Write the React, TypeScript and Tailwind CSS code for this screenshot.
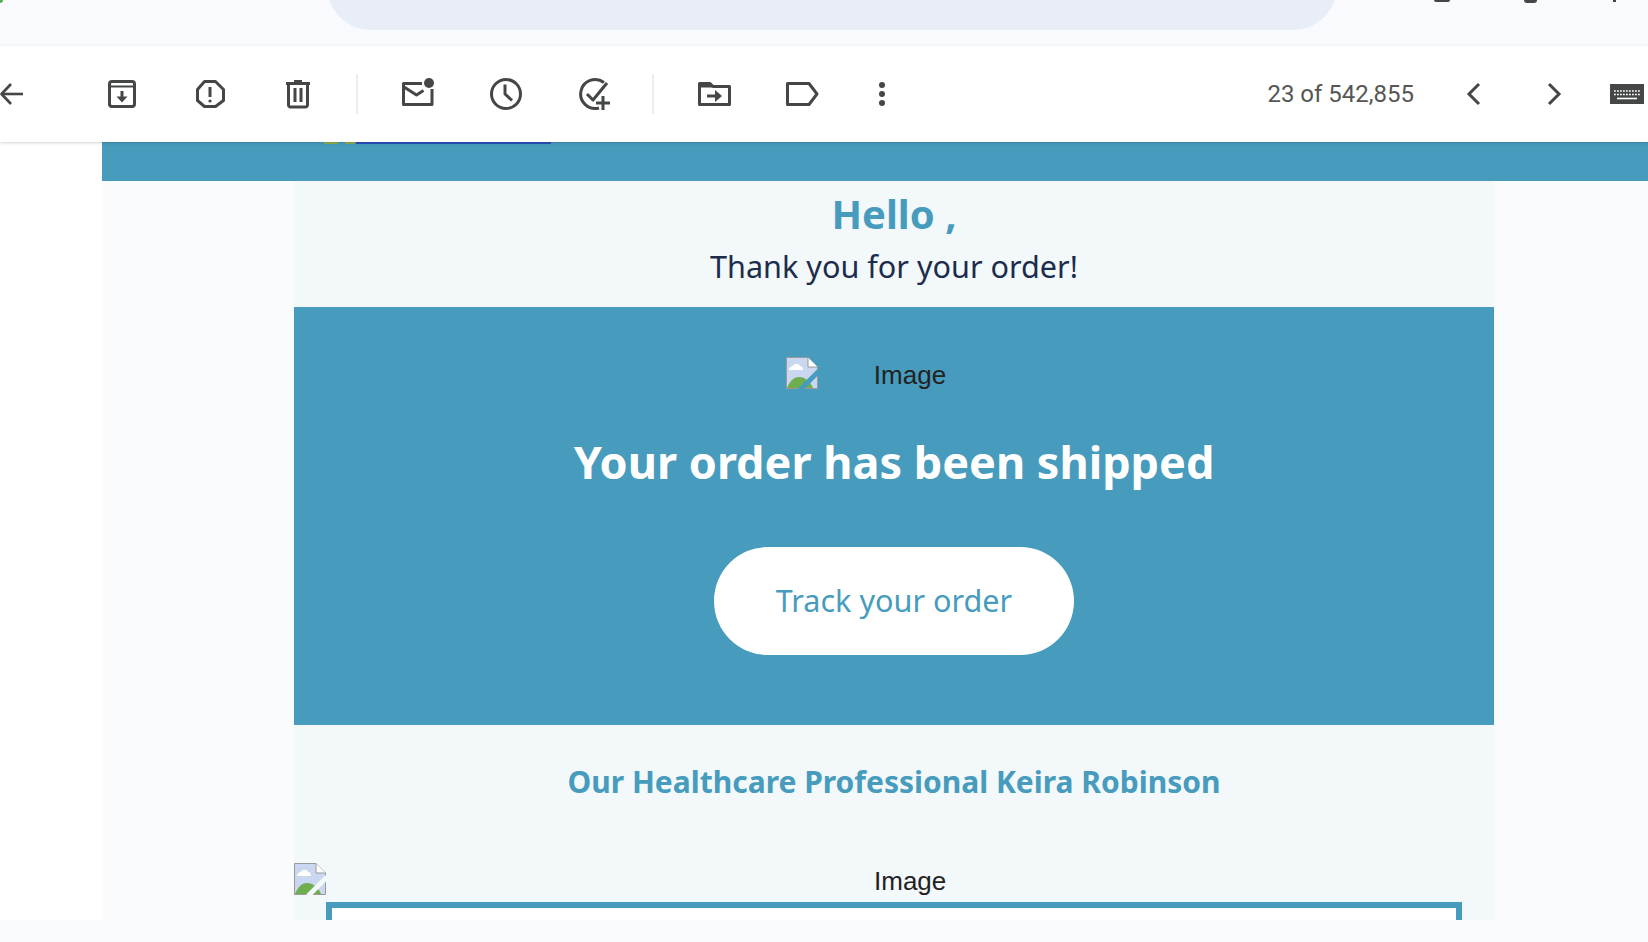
const body = { fontFamily: '"Noto Sans", "Open Sans", sans-serif' };
const arial = { fontFamily: '"Liberation Sans", sans-serif' };

function BrokenImage({ cut = "#479cbd" }: { cut?: string }) {
  return (
    <svg width="32" height="32" viewBox="0 0 32 32" className="shrink-0">
      <path d="M.5.5H22L31.5 10V31.5H.5Z" fill="#c9d7f1" stroke="#9a9a9a" />
      <path d="M22 .5V10H31.5" fill="#fff" stroke="#9a9a9a" />
      <path d="M3 13C3 10 6 9 7 9C8 6 13 6 14 9C16 9 17 11 17 13Z" fill="#fff" />
      <path d="M1 31C4 23 9 20 13 20C19 20 24 24 27 31Z" fill="#6fae4f" />
      <path d="M14 33L33 14" stroke={cut} strokeWidth="5" />
    </svg>
  );
}

function Icon({ children, w = 36 }: { children: React.ReactNode; w?: number }) {
  return (
    <svg width={w} height="36" viewBox={`0 0 ${w} 36`} fill="none" stroke="#444746" strokeWidth="3" strokeLinejoin="round">
      {children}
    </svg>
  );
}

function Slot({ children, className = "w-[88px]" }: { children: React.ReactNode; className?: string }) {
  return <div className={`flex justify-center items-center ${className}`}>{children}</div>;
}

function Divider({ className }: { className: string }) {
  return <div className={`w-[2px] h-[40px] bg-[#eeeeee] ${className}`} />;
}

export default function App() {
  return (
    <div className="flex flex-col h-[942px] w-[1648px] overflow-hidden bg-[#f8fafd]" style={body}>
      <div className="relative h-[46px] shrink-0 overflow-hidden pl-[327px]">
        <div className="w-[1010px] h-[88px] -mt-[58px] bg-[#e9eef6] rounded-[44px]" />
        <div className="absolute left-0 top-0 w-[3px] h-[3px] rounded-br-full bg-[#4caf50]" />
        <div className="absolute left-[1434px] top-0 w-[16px] h-[2px] rounded-b-full bg-[#444746]" />
        <div className="absolute left-[1524px] top-0 w-[13px] h-[3px] rounded-b-[3px] bg-[#444746]" />
        <div className="absolute left-[1613px] top-0 w-[3px] h-[2px] bg-[#444746]" />
      </div>

      <div className="relative z-10 h-[96px] shrink-0 bg-white flex items-center shadow-[0_1px_3px_rgba(0,0,0,0.18)]">
        <div className="w-[78px]">
          <Icon w={24}>
            <path d="M23 18H2" strokeWidth="2.6" />
            <path d="M11 8L1.5 18L11 28" strokeWidth="2.6" />
          </Icon>
        </div>
        <Slot>
          <Icon>
            <rect x="5.5" y="5.5" width="25" height="25" rx="2.5" />
            <path d="M6 10.5H30" strokeWidth="2" />
            <path d="M18 15V22" />
            <path d="M12.5 20.5H23.5L18 26.5Z" fill="#444746" stroke="none" />
          </Icon>
        </Slot>
        <Slot>
          <Icon>
            <path d="M12.5 5.5H23.5L31.5 13.5V24.5L23.5 30.5H12.5L5.5 24.5V13.5Z" />
            <path d="M18 11V21" />
            <circle cx="18" cy="25" r="1.6" fill="#444746" stroke="none" />
          </Icon>
        </Slot>
        <Slot>
          <Icon>
            <path d="M6 7.5H30" strokeWidth="3" />
            <path d="M14 5.5H22" strokeWidth="3" />
            <path d="M8.5 8V29C8.5 30 9.5 31 10.5 31H25.5C26.5 31 27.5 30 27.5 29V8" />
            <path d="M15 12V26M21 12V26" strokeWidth="3" />
          </Icon>
        </Slot>
        <Divider className="ml-[14px] mr-[16px]" />
        <Slot>
          <Icon>
            <path d="M22 7.5H3.5V28.5H32V13" />
            <path d="M4 11L16.5 19L23.5 14.5" />
            <circle cx="29" cy="7" r="5" fill="#444746" stroke="none" />
          </Icon>
        </Slot>
        <Slot>
          <Icon>
            <circle cx="18" cy="18" r="14.5" />
            <path d="M17 8.5V18L24 24.5" />
          </Icon>
        </Slot>
        <Slot>
          <Icon>
            <path d="M28 6.5A14.5 14.5 0 1 0 23 32" />
            <path d="M11 18L17 24L31 7" />
            <path d="M27 20V34M20 27H34" />
          </Icon>
        </Slot>
        <Divider className="ml-[14px] mr-[16px]" />
        <Slot>
          <Icon>
            <path d="M3.5 7.5H14L17 10.5H33.5V28.5H3.5Z" />
            <path d="M4 8H14L17 11.5H4Z" fill="#444746" stroke="none" />
            <path d="M11 20H20" strokeWidth="3" />
            <path d="M19 14L26 20L19 26Z" fill="#444746" stroke="none" />
          </Icon>
        </Slot>
        <Slot>
          <Icon>
            <path d="M3.5 7.5H25L33 18L25 28.5H3.5Z" />
          </Icon>
        </Slot>
        <Slot className="w-[72px]">
          <Icon>
            <circle cx="18" cy="9" r="3" fill="#444746" stroke="none" />
            <circle cx="18" cy="18" r="3" fill="#444746" stroke="none" />
            <circle cx="18" cy="27" r="3" fill="#444746" stroke="none" />
          </Icon>
        </Slot>
        <div className="ml-auto flex items-center pr-[4px]">
          <span className="text-[24px] text-[#555756]" style={{ fontFamily: "Roboto, sans-serif" }}>23 of 542,855</span>
          <Slot className="w-[80px] ml-[20px]">
            <Icon>
              <path d="M23 8L13 18L23 28" strokeLinejoin="miter" />
            </Icon>
          </Slot>
          <Slot className="w-[80px]">
            <Icon>
              <path d="M13 8L23 18L13 28" strokeLinejoin="miter" />
            </Icon>
          </Slot>
          <svg width="34" height="20" viewBox="0 0 34 20" className="ml-[16px]">
            <rect width="34" height="20" fill="#444746" />
            <path d="M4 7H30M4 10.5H30" stroke="#fff" strokeWidth="1.6" strokeDasharray="1.8 1.2" />
            <path d="M7 14.5H27" stroke="#fff" strokeWidth="1.6" />
          </svg>
        </div>
      </div>

      <div className="h-[778px] shrink-0 bg-white pl-[102px]">
        <div className="h-full bg-[#f9fbfd] flex flex-col">
          <div className="h-[39px] shrink-0 bg-[#479cbd] flex items-start pl-[222px]">
            <div className="w-[14px] h-[2px] bg-[#8fae4f]" />
            <div className="w-[10px] h-[2px] ml-[7px] bg-[#8fae4f]" />
            <div className="w-[195px] h-[2px] ml-[1px] bg-[#2a4fbf]" />
          </div>
          <div className="w-[1200px] ml-[192px] bg-[#f3f8fb] flex-1 flex flex-col items-center">
            <h1 className="text-[40px] leading-[46px] font-bold text-[#479cbd] mt-[10px]">Hello ,</h1>
            <p className="text-[30.6px] leading-[40px] text-[#1c2c4c] mt-[9px]">Thank you for your order!</p>
            <div className="w-full h-[418px] mt-[21px] bg-[#479cbd] flex flex-col items-center">
              <div className="flex items-start mt-[50px] h-[32px]">
                <BrokenImage />
                <span className="ml-[56px] mr-[56px] mt-[2px] text-[26px] leading-[32px] text-[#222222]" style={arial}>Image</span>
              </div>
              <h2 className="text-[45px] leading-[58px] font-bold text-white mt-[44px]">Your order has been shipped</h2>
              <div className="w-[360px] h-[108px] mt-[56px] bg-white rounded-full flex items-center justify-center text-[30.6px] text-[#479cbd]">
                Track your order
              </div>
            </div>
            <h3 className="text-[30px] leading-[40px] font-bold text-[#479cbd] mt-[37px]">Our Healthcare Professional Keira Robinson</h3>
            <div className="w-full flex items-start mt-[61px] h-[32px]">
              <BrokenImage cut="#f3f8fb" />
              <span className="ml-[548px] mt-[2px] text-[26px] leading-[32px] text-[#222222]" style={arial}>Image</span>
            </div>
            <div className="w-[1136px] flex-1 border-x-[6px] border-t-[6px] border-[#479cbd] bg-white mt-[7px]" />
          </div>
        </div>
      </div>

      <div className="flex-1" />
    </div>
  );
}
